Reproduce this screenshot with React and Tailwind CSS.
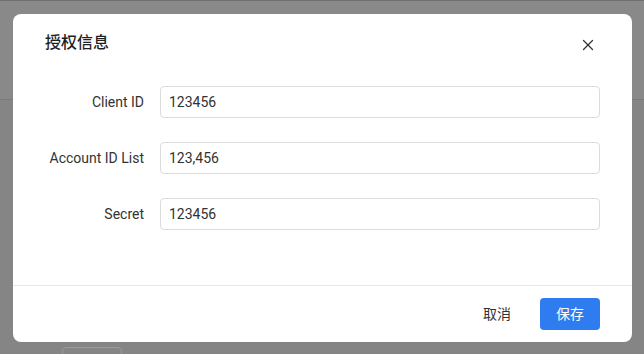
import { X } from 'lucide-react'

const fields = [
  { label: 'Client ID', value: '123456' },
  { label: 'Account ID List', value: '123,456' },
  { label: 'Secret', value: '123456' },
]

export default function App() {
  return (
    <div
      className="relative h-[354px] w-[644px] overflow-hidden bg-[#858585]"
      style={{ fontFamily: 'Roboto, "Noto Sans CJK SC", sans-serif' }}
    >
      {/* page behind the overlay */}
      <div className="h-[100px] border-t border-b border-t-[#6f6f6f] border-b-[#7b7b7b] bg-[#898989]" />
      <div className="pt-[247px] pl-[62px]">
        <div className="h-[20px] w-[60px] rounded border border-[#9a9a9a]" />
      </div>

      {/* dialog */}
      <div className="absolute left-[13px] top-[14px] flex h-[328px] w-[619px] flex-col rounded-lg bg-white">
        <div className="flex items-center justify-between pl-8 pr-[35px] pt-[17px]">
          <h2 className="text-base leading-6 font-medium text-[#1f1f1f]">授权信息</h2>
          <X size={18} strokeWidth={1.6} className="mt-[3px] text-[#333]" />
        </div>

        <div className="mt-[31px] flex flex-col gap-6 px-8">
          {fields.map((f) => (
            <div key={f.label} className="flex items-center gap-4">
              <label className="w-[99px] text-right text-sm text-[#333]">{f.label}</label>
              <input
                readOnly
                value={f.value}
                className="h-8 flex-1 rounded border border-[#dcdcdc] px-2 text-sm text-[#333] outline-none"
              />
            </div>
          ))}
        </div>

        <div className="mt-auto flex justify-end gap-4 border-t border-[#e6e6e6] px-8 pt-3 pb-3">
          <button className="h-8 w-[54px] text-sm text-[#333]">取消</button>
          <button className="h-8 w-[60px] rounded bg-[#2f7bf0] text-sm text-white">保存</button>
        </div>
      </div>
    </div>
  )
}
